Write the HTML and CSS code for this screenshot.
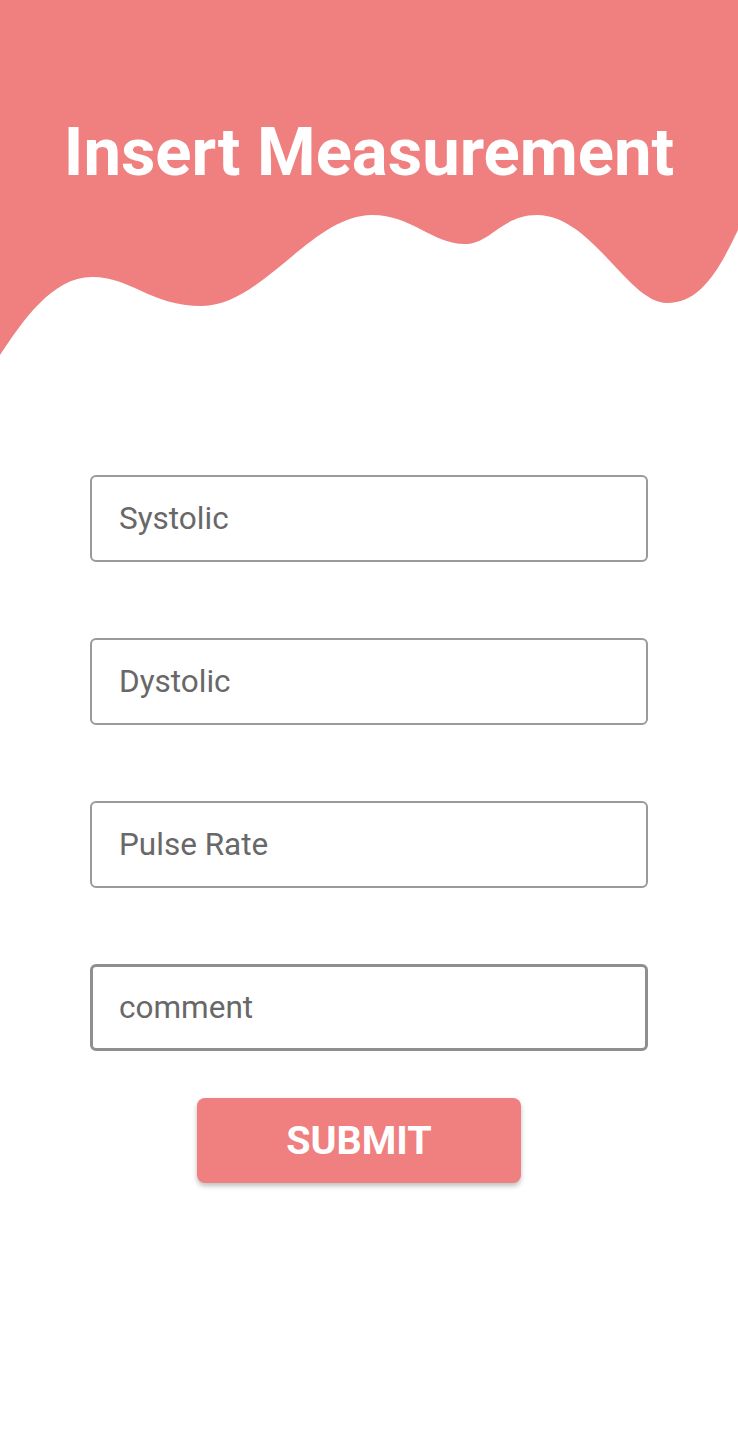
FILE: index.html
```html
<!DOCTYPE html>
<html>
<head>
<meta charset="utf-8">
<link rel="stylesheet" href="styles.css">
</head>
<body>
<div class="page">
  <header class="header">
    <svg class="wave" viewBox="0 0 738 360" preserveAspectRatio="none" xmlns="http://www.w3.org/2000/svg">
      <path fill="#F08080" d="M0,0 H738 V230 C718,272 700,303 667,303 C628,303 592,215 537,215 C502,215 490,244 465,244 C432,244 412,215 372,215 C312,215 262,306 202,306 C150,306 132,277 92,277 C52,277 22,322 0,355 Z"/>
    </svg>
    <h1 class="title">Insert Measurement</h1>
  </header>
  <form class="form">
    <div class="field"><span class="placeholder">Systolic</span></div>
    <div class="field"><span class="placeholder">Dystolic</span></div>
    <div class="field"><span class="placeholder">Pulse Rate</span></div>
    <div class="field field-focus"><span class="placeholder">comment</span></div>
    <div class="actions"><button type="button" class="submit">SUBMIT</button></div>
  </form>
</div>
</body>
</html>
```
FILE: styles.css
```css
* { box-sizing: border-box; }
html, body { margin: 0; padding: 0; background: #fff; }
body { font-family: Roboto, "Noto Sans", "Liberation Sans", sans-serif; }
.page { width: 738px; height: 1448px; overflow: hidden; }
.header { position: relative; height: 360px; }
.wave { position: absolute; left: 0; top: 0; width: 738px; height: 360px; display: block; }
.title {
  position: relative;
  margin: 0;
  padding-top: 112px;
  text-align: center;
  color: #fff;
  font-weight: 700;
  font-size: 67px;
  line-height: 80px;
  letter-spacing: 0;
}
.form {
  display: flex;
  flex-direction: column;
  align-items: center;
  padding-top: 115px;
  gap: 76px;
}
.field {
  width: 558px;
  height: 87px;
  border: 2px solid #9a9a9a;
  border-radius: 6px;
  display: flex;
  align-items: center;
  padding-left: 27px;
}
.field-focus { border: 3px solid #8f8f8f; padding-left: 26px; }
.placeholder { color: #686868; font-size: 31.5px; }
.actions { margin-top: -29px; display: flex; justify-content: center; width: 100%; padding-right: 20px; }
.submit {
  width: 324px;
  height: 85px;
  border: none;
  border-radius: 8px;
  background: #F08080;
  color: #fff;
  font-family: Roboto, "Noto Sans", "Liberation Sans", sans-serif;
  font-weight: 700;
  font-size: 39.5px;
  box-shadow: 0 3px 5px rgba(0,0,0,0.25);
}
```
